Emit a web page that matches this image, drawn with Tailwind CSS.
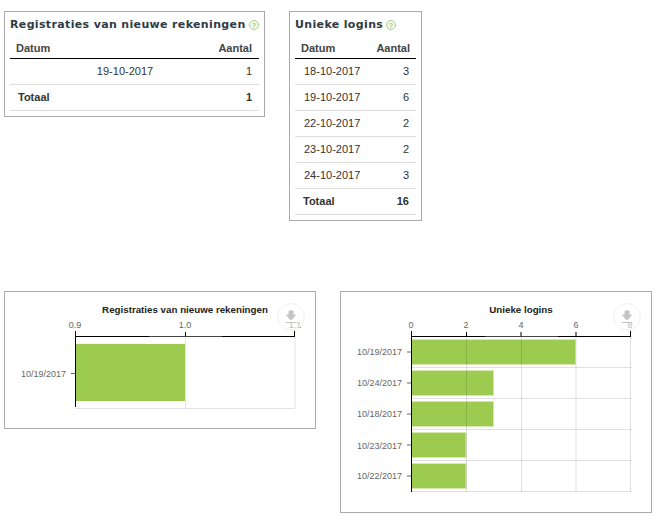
<!DOCTYPE html>
<html lang="nl">
<head>
    <meta charset="UTF-8">
    <title>Statistieken</title>
    <script src="https://cdn.jsdelivr.net/npm/@tailwindcss/browser@4"></script>
</head>
<body class="bg-white w-[666px] h-[520px] overflow-hidden font-['Liberation_Sans',Arial,sans-serif] text-[#333]">

    <!-- Tabellen -->
    <div class="flex items-start pt-[11px] pl-1 h-[291px]">
        <div class="w-[261px] h-[106px] border border-[#aaa] px-[5px]">
            <h2 class="h-[25px] pt-[2px] flex items-center gap-[3px] font-['DejaVu_Sans',sans-serif] font-bold text-[11px] tracking-[0.35px] text-[#2f3b45] whitespace-nowrap">
                Registraties van nieuwe rekeningen
                <svg class="shrink-0 -mt-[1px]" width="10" height="10" viewBox="0 0 10 10"><circle cx="5" cy="5" r="4.500" fill="#f4faef" stroke="#a8d47c"/><text x="5" y="8" text-anchor="middle" font-size="8" font-weight="normal" font-family="Liberation Sans" fill="#8abb55">?</text></svg>
            </h2>
            <div class="flex justify-between items-center h-[22px] pt-[1px] pl-[6px] pr-[7px] border-b border-black text-[11px] font-bold text-[#444]">
                <span>Datum</span><span>Aantal</span>
            </div>
            <div class="flex items-center h-[26px] border-b border-[#ddd] pr-[7px] text-[11px]">
                <span class="w-[230px] text-center">19-10-2017</span><span class="ml-auto">1</span>
            </div>
            <div class="flex justify-between items-center h-[26px] border-b border-[#ddd] pl-[8px] pr-[7px] text-[11px] font-bold">
                <span>Totaal</span><span>1</span>
            </div>
        </div>

        <div class="ml-6 w-[133px] h-[210px] border border-[#aaa] px-[5px]">
            <h2 class="h-[25px] pt-[2px] flex items-center gap-[3px] font-['DejaVu_Sans',sans-serif] font-bold text-[11px] tracking-[0.35px] text-[#2f3b45] whitespace-nowrap">
                Unieke logins
                <svg class="shrink-0 -mt-[1px]" width="10" height="10" viewBox="0 0 10 10"><circle cx="5" cy="5" r="4.500" fill="#f4faef" stroke="#a8d47c"/><text x="5" y="8" text-anchor="middle" font-size="8" font-weight="normal" font-family="Liberation Sans" fill="#8abb55">?</text></svg>
            </h2>
            <div class="flex justify-between items-center h-[22px] pt-[1px] pl-[6px] pr-[6px] border-b border-black text-[11px] font-bold text-[#444]">
                <span>Datum</span><span>Aantal</span>
            </div>
            <div class="flex justify-between items-center h-[26px] border-b border-[#ddd] pl-[9px] pr-[7px] text-[11px]"><span>18-10-2017</span><span>3</span></div>
            <div class="flex justify-between items-center h-[26px] border-b border-[#ddd] pl-[9px] pr-[7px] text-[11px]"><span>19-10-2017</span><span>6</span></div>
            <div class="flex justify-between items-center h-[26px] border-b border-[#ddd] pl-[9px] pr-[7px] text-[11px]"><span>22-10-2017</span><span>2</span></div>
            <div class="flex justify-between items-center h-[26px] border-b border-[#ddd] pl-[9px] pr-[7px] text-[11px]"><span>23-10-2017</span><span>2</span></div>
            <div class="flex justify-between items-center h-[26px] border-b border-[#ddd] pl-[9px] pr-[7px] text-[11px]"><span>24-10-2017</span><span>3</span></div>
            <div class="flex justify-between items-center h-[26px] border-b border-[#ddd] pl-[8px] pr-[7px] text-[11px] font-bold"><span>Totaal</span><span>16</span></div>
        </div>
    </div>

    <!-- Grafieken -->
    <div class="flex items-start pl-1">
        <div class="w-[312px] h-[138px] border border-[#aaa]">
            <svg width="310" height="136" viewBox="5 292 310 136" font-family="Liberation Sans" font-size="9" fill="#666">
                <text x="185" y="313" text-anchor="middle" font-size="9.750" font-weight="bold" fill="#222">Registraties van nieuwe rekeningen</text>
                <g stroke="#e4e4e4"><path d="M185.500 336v72M295 336v72M75 408.500h220"/></g>
                <rect x="75" y="344" width="110" height="57" fill="#9ccb50"/>
                <path d="M75.500 331v76M75 336.500h220M185.500 332v4M294.500 331v5" stroke="#000" fill="none"/>
                <path d="M149 336.500h73" stroke="#444"/>
                <path d="M71 373.500h4" stroke="#666"/>
                <text x="75" y="328" text-anchor="middle">0.9</text>
                <text x="185" y="328" text-anchor="middle">1.0</text>
                <text x="295" y="328" text-anchor="middle">1.1</text>
                <text x="66" y="377" text-anchor="end">10/19/2017</text>
                <circle cx="291" cy="317" r="13.500" fill="#fff" fill-opacity="0.55" stroke="#f0f0f0"/>
                <path d="M289 311h4v4h2.500l-4.500 5-4.500-5h2.500zM285.500 322.500h11" fill="#c4c4c4" stroke="#c4c4c4"/>
            </svg>
        </div>

        <div class="ml-6 w-[312px] h-[222px] border border-[#aaa]">
            <svg width="310" height="220" viewBox="341 292 310 220" font-family="Liberation Sans" font-size="9" fill="#666">
                <text x="521" y="313" text-anchor="middle" font-size="9.750" font-weight="bold" fill="#222">Unieke logins</text>
                <g fill="#9ccb50" stroke="#d4e8b0"><rect x="411.500" y="339.500" width="164" height="25"/><rect x="411.500" y="370.500" width="82" height="25"/><rect x="411.500" y="401.500" width="82" height="25"/><rect x="411.500" y="432.500" width="54.500" height="25"/><rect x="411.500" y="463.500" width="54.500" height="25"/></g>
                <g stroke="#000" stroke-opacity="0.12"><path d="M466.500 336v156M521.500 336v156M576 336v156M630.500 336v156M411 367.500h220M411 398.500h220M411 429.500h220M411 460.500h220M411 491.500h220"/></g>
                <path d="M411.500 331v161M411 336.500h220M466.500 332v4M521 332v4M576 332v4M630.500 331v5" stroke="#000" fill="none"/>
                <path d="M485 336.500h73" stroke="#444"/>
                <path d="M407 352h4M407 383h4M407 414h4M407 445h4M407 476h4" stroke="#666"/>
                <text x="411" y="328" text-anchor="middle">0</text>
                <text x="466" y="328" text-anchor="middle">2</text>
                <text x="521" y="328" text-anchor="middle">4</text>
                <text x="576" y="328" text-anchor="middle">6</text>
                <text x="630" y="328" text-anchor="middle">8</text>
                <text x="402" y="355" text-anchor="end">10/19/2017</text>
                <text x="402" y="386" text-anchor="end">10/24/2017</text>
                <text x="402" y="417" text-anchor="end">10/18/2017</text>
                <text x="402" y="449" text-anchor="end">10/23/2017</text>
                <text x="402" y="479" text-anchor="end">10/22/2017</text>
                <circle cx="627" cy="317" r="13.500" fill="#fff" fill-opacity="0.55" stroke="#f0f0f0"/>
                <path d="M625 311h4v4h2.500l-4.500 5-4.500-5h2.500zM621.500 322.500h11" fill="#c4c4c4" stroke="#c4c4c4"/>
            </svg>
        </div>
    </div>

</body>
</html>
